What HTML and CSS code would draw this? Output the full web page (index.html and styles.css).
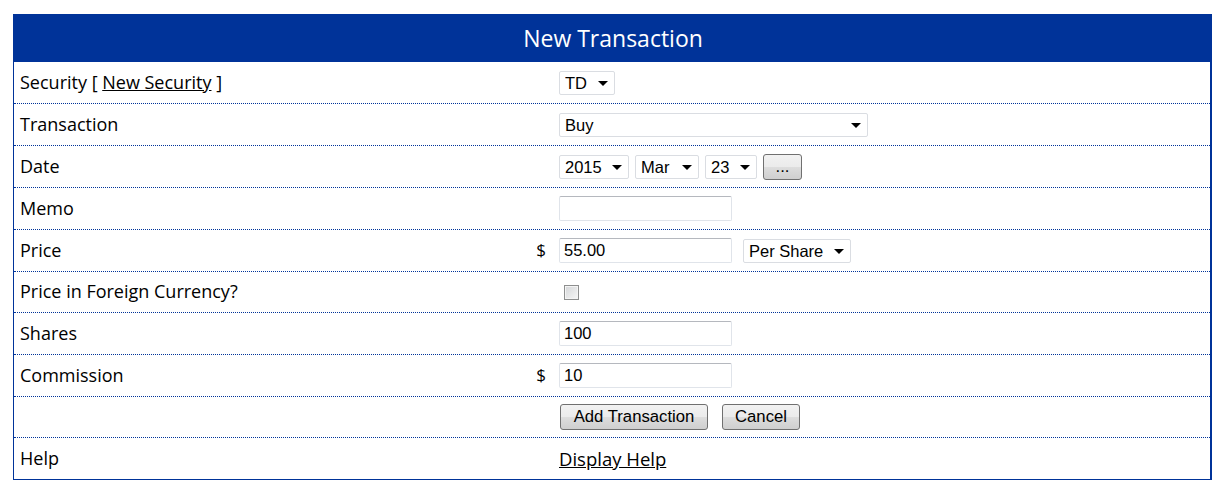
FILE: index.html
```html
<!DOCTYPE html>
<html lang="en">
<head>
    <meta charset="UTF-8">
    <title>New Transaction</title>
    <link rel="stylesheet" href="styles.css">
</head>
<body>
    <div class="panel">
        <div class="panel-title">New Transaction</div>

        <div class="row">
            <div class="label">Security [ <a href="#">New Security</a> ]</div>
            <div class="unit"></div>
            <div class="value">
                <span class="sel"><select class="w-td"><option>TD</option></select></span>
            </div>
        </div>

        <div class="row">
            <div class="label">Transaction</div>
            <div class="unit"></div>
            <div class="value">
                <span class="sel"><select class="w-type"><option>Buy</option></select></span>
            </div>
        </div>

        <div class="row">
            <div class="label">Date</div>
            <div class="unit"></div>
            <div class="value">
                <span class="sel"><select class="w-year"><option>2015</option></select></span>
                <span class="sel"><select class="w-month"><option>Mar</option></select></span>
                <span class="sel"><select class="w-day"><option>23</option></select></span>
                <button class="btn btn-pick">...</button>
            </div>
        </div>

        <div class="row">
            <div class="label">Memo</div>
            <div class="unit"></div>
            <div class="value">
                <input type="text" class="text">
            </div>
        </div>

        <div class="row">
            <div class="label">Price</div>
            <div class="unit">$</div>
            <div class="value">
                <input type="text" class="text" value="55.00">
                <span class="sel sel-gap"><select class="w-per"><option>Per Share</option></select></span>
            </div>
        </div>

        <div class="row short">
            <div class="label">Price in Foreign Currency?</div>
            <div class="unit"></div>
            <div class="value">
                <input type="checkbox" class="check">
            </div>
        </div>

        <div class="row">
            <div class="label">Shares</div>
            <div class="unit"></div>
            <div class="value">
                <input type="text" class="text" value="100">
            </div>
        </div>

        <div class="row">
            <div class="label">Commission</div>
            <div class="unit">$</div>
            <div class="value">
                <input type="text" class="text" value="10">
            </div>
        </div>

        <div class="row short">
            <div class="label"></div>
            <div class="unit"></div>
            <div class="value actions">
                <button class="btn btn-add">Add Transaction</button>
                <button class="btn btn-cancel">Cancel</button>
            </div>
        </div>

        <div class="row last">
            <div class="label">Help</div>
            <div class="unit"></div>
            <div class="value">
                <a href="#" class="help-link">Display Help</a>
            </div>
        </div>
    </div>
</body>
</html>
```

FILE: styles.css
```css
body {
    margin: 0;
    padding: 14px 0 0 13px;
    background: #fff;
    color: #000;
    font-family: 'Open Sans', 'DejaVu Sans', sans-serif;
}

.panel {
    width: 1196px;
    border-left: 1px solid #003399;
    border-right: 2px solid #003399;
    border-bottom: 1px solid #003399;
}

.panel-title {
    height: 48px;
    margin-right: -2px;
    background: #003399;
    color: #fff;
    font-size: 23px;
    display: flex;
    align-items: center;
    justify-content: center;
}

.row {
    height: 41px;
    display: grid;
    grid-template-columns: 510px 16px 1fr;
    align-items: center;
    padding-left: 6px;
    border-bottom: 1px dotted #003399;
    font-size: 18px;
}

.row.short {
    height: 40px;
}

.row.last {
    border-bottom: none;
}

.label {
    padding-bottom: 2px;
}

.label a {
    color: #000;
}

.unit {
    text-align: right;
    font-size: 17px;
    padding-bottom: 2px;
}

.value {
    display: flex;
    align-items: center;
    padding-left: 13px;
    font-family: 'Liberation Sans', Arial, sans-serif;
    font-size: 16.5px;
}

.sel {
    position: relative;
    display: inline-block;
    margin-right: 6px;
}

.sel-gap {
    margin-left: 11px;
}

.sel::after {
    content: '';
    position: absolute;
    right: 7px;
    top: 10px;
    border-left: 5px solid transparent;
    border-right: 5px solid transparent;
    border-top: 5px solid #000;
    pointer-events: none;
}

select {
    -webkit-appearance: none;
    appearance: none;
    height: 24px;
    padding: 0 0 0 5px;
    border: 1px solid #dadde2;
    border-radius: 2px;
    background: #fff;
    color: #000;
    font-family: 'Liberation Sans', Arial, sans-serif;
    font-size: 16.5px;
    display: block;
}

.w-td { width: 56px; }
.w-type { width: 309px; }
.w-year { width: 70px; }
.w-month { width: 64px; }
.w-day { width: 52px; }
.w-per { width: 108px; }

.text {
    width: 173px;
    height: 25px;
    box-sizing: border-box;
    padding: 0 4px;
    border: 1px solid #e0e4ea;
    border-top-color: #b5b8be;
    border-radius: 2px;
    font-family: 'Liberation Sans', Arial, sans-serif;
    font-size: 16.5px;
    color: #000;
}

.check {
    -webkit-appearance: none;
    appearance: none;
    width: 15px;
    height: 15px;
    margin: 0 0 0 5px;
    border: 1px solid #8e8f8f;
    background: linear-gradient(135deg, #d4d6d8, #f7f7f7);
    box-shadow: inset 0 0 0 1px #f4f4f4;
}

.btn {
    height: 26px;
    box-sizing: border-box;
    border: 1px solid #707070;
    border-radius: 3px;
    background: linear-gradient(#f2f2f2 0%, #ebebeb 50%, #dddddd 51%, #cfcfcf 100%);
    font-family: 'Liberation Sans', Arial, sans-serif;
    font-size: 16.7px;
    color: #000;
    padding: 0 12px;
}

.btn-pick {
    width: 39px;
    height: 26px;
    padding: 0;
    line-height: 20px;
}

.actions {
    padding-left: 14px;
}

.btn-add {
    width: 148px;
    margin-right: 14px;
}

.btn-cancel {
    width: 78px;
}

.help-link {
    color: #000;
    font-family: 'Open Sans', 'DejaVu Sans', sans-serif;
    font-size: 18.5px;
}
```
